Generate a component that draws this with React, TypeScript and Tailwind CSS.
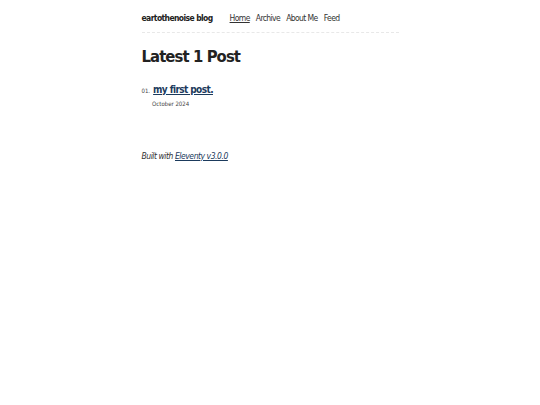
export default function App() {
  return (
    <div className="min-h-[405px] bg-white text-[#222] [font-family:'DejaVu_Sans_Condensed','DejaVu_Sans',sans-serif]">
      <div className="mx-auto w-[269px] px-[6px]">
        <header className="flex items-start gap-[17px] border-b border-dashed border-[#e8e8e8] pt-[12px] pb-[8px]">
          <a className="text-[8.5px] leading-[12px] font-bold tracking-[-0.6px] text-[#222]">eartothenoise blog</a>
          <nav className="flex gap-[6px] text-[8.5px] leading-[12px] tracking-[-0.6px] text-[#333]">
            <a className="underline">Home</a>
            <a>Archive</a>
            <a>About Me</a>
            <a>Feed</a>
          </nav>
        </header>
        <main>
          <h1 className="mt-[14px] text-[16.5px] font-bold leading-[20px] tracking-[-0.9px] text-[#222]">Latest 1 Post</h1>
          <ol className="mt-[16px]">
            <li className="flex items-baseline gap-[3px] text-[10px] leading-[13px]">
              <span className="text-[6px] leading-[8px] text-[#444]">01.</span>
              <div className="text-[10px] leading-[13px]">
                <a className="font-bold tracking-[-0.6px] text-[#1b3a5c] underline">my first post.</a>
                <div className="mt-[3.5px] text-[6px] leading-[8px] text-[#444] -ml-[1px]">October 2024</div>
              </div>
            </li>
          </ol>
        </main>
        <footer className="mt-[42px] text-[8.5px] leading-[12px] italic tracking-[-0.45px] text-[#333]">
          Built with <a className="underline text-[#1b3a5c]">Eleventy v3.0.0</a>
        </footer>
      </div>
    </div>
  );
}
